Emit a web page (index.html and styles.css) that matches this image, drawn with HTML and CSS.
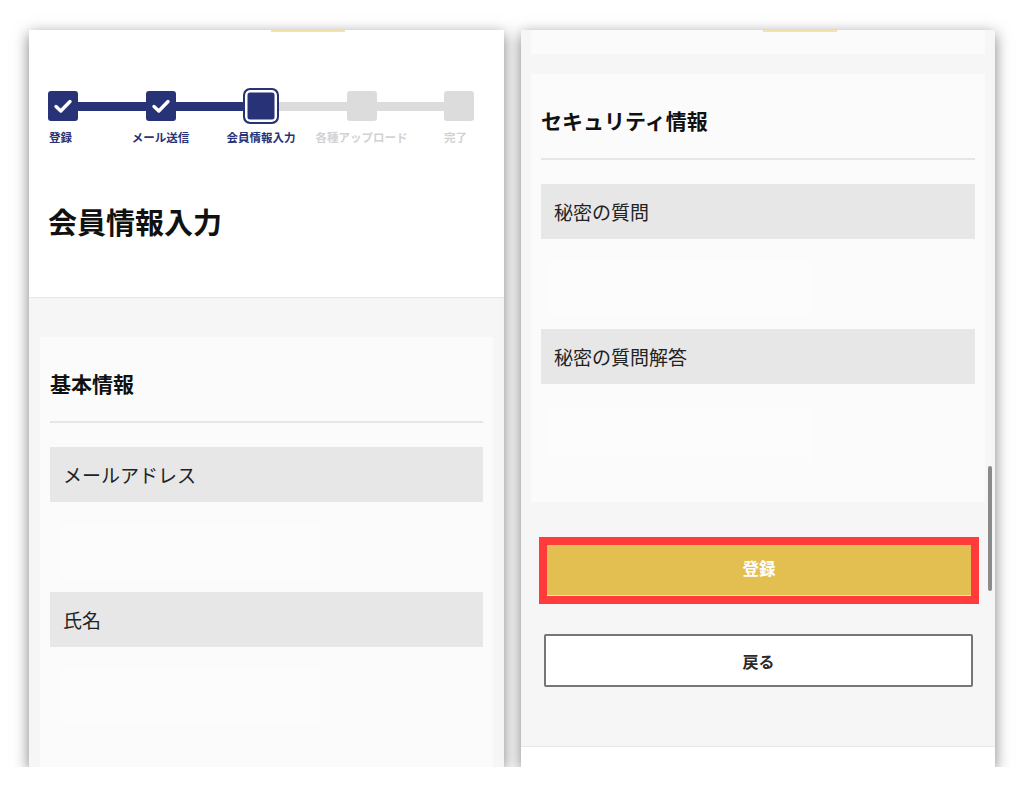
FILE: index.html
```html
<!DOCTYPE html>
<html lang="ja">
<head>
<meta charset="utf-8">
<title>会員情報入力</title>
<link rel="stylesheet" href="styles.css">
</head>
<body>
<div class="screens">
  <section class="phone">
    <span class="topline"></span>
    <header class="page-head">
      <div class="steps">
        <div class="step done">
          <div class="mark"><span class="box"><svg viewBox="0 0 30 30" width="30" height="30"><path d="M8 15.5 L12.8 20 L22 10.5" fill="none" stroke="#fff" stroke-width="3.4" stroke-linecap="round" stroke-linejoin="round"/></svg></span></div>
          <span class="label">登録</span>
        </div>
        <span class="connector on"></span>
        <div class="step done">
          <div class="mark"><span class="box"><svg viewBox="0 0 30 30" width="30" height="30"><path d="M8 15.5 L12.8 20 L22 10.5" fill="none" stroke="#fff" stroke-width="3.4" stroke-linecap="round" stroke-linejoin="round"/></svg></span></div>
          <span class="label">メール送信</span>
        </div>
        <span class="connector on"></span>
        <div class="step current">
          <div class="mark"><span class="box"></span></div>
          <span class="label">会員情報入力</span>
        </div>
        <span class="connector"></span>
        <div class="step todo">
          <div class="mark"><span class="box"></span></div>
          <span class="label">各種アップロード</span>
        </div>
        <span class="connector"></span>
        <div class="step todo">
          <div class="mark"><span class="box"></span></div>
          <span class="label">完了</span>
        </div>
      </div>
      <h1 class="page-title">会員情報入力</h1>
    </header>
    <main class="content">
      <div class="card card-long">
        <h2 class="card-title">基本情報</h2>
        <div class="field">
          <div class="field-label">メールアドレス</div>
          <div class="field-input"><span class="ghost"></span></div>
        </div>
        <div class="field">
          <div class="field-label">氏名</div>
          <div class="field-input"><span class="ghost"></span></div>
        </div>
      </div>
    </main>
  </section>

  <section class="phone phone-right">
    <span class="topline"></span>
    <div class="content content-right">
      <div class="card card-stub"></div>
      <div class="card">
        <h2 class="card-title">セキュリティ情報</h2>
        <div class="field">
          <div class="field-label">秘密の質問</div>
          <div class="field-input"><span class="ghost"></span></div>
        </div>
        <div class="field">
          <div class="field-label">秘密の質問解答</div>
          <div class="field-input"><span class="ghost"></span></div>
        </div>
      </div>
      <div class="highlight">
        <button class="btn btn-primary" type="button">登録</button>
      </div>
      <button class="btn btn-back" type="button">戻る</button>
    </div>
    <footer class="phone-foot"></footer>
    <span class="scrollbar"></span>
  </section>
</div>
</body>
</html>
```

FILE: styles.css
```css
* { box-sizing: border-box; }

html, body {
  margin: 0;
  padding: 0;
  background: #ffffff;
}

body {
  font-family: "Noto Sans CJK JP", "Noto Sans", sans-serif;
  color: #1a1a1a;
}

.screens {
  display: flex;
  gap: 17px;
  padding: 30px 0 0 29px;
}

.phone {
  position: relative;
  width: 475px;
  height: 737px;
  overflow: hidden;
  background: #f6f6f6;
  box-shadow: 0 4px 14px rgba(0, 0, 0, 0.5);
  display: flex;
  flex-direction: column;
}

.phone-right {
  width: 474px;
}

.topline {
  position: absolute;
  top: 0;
  left: 242px;
  width: 74px;
  height: 2px;
  background: #f1e3ab;
}

/* header with steps */
.page-head {
  flex: none;
  background: #ffffff;
  border-bottom: 1px solid #e6e6e6;
  padding: 58px 30px 56px 19px;
}

.steps {
  display: flex;
  align-items: flex-start;
}

.step {
  display: flex;
  flex-direction: column;
  align-items: center;
  width: 30px;
  flex: none;
}

.step.current { width: 36px; }

.mark {
  height: 36px;
  display: flex;
  align-items: center;
  justify-content: center;
}

.box {
  display: block;
  width: 30px;
  height: 30px;
  border-radius: 3px;
  background: #dcdcdc;
}

.box svg { display: block; }

.done .box { background: #283377; }

.current .box {
  width: 36px;
  height: 36px;
  border-radius: 7px;
  background: #283377;
  border: 2.5px solid #283377;
  box-shadow: inset 0 0 0 2.5px #ffffff;
}

.label {
  margin-top: 5px;
  font-size: 11.5px;
  line-height: 16px;
  font-weight: 700;
  white-space: nowrap;
  color: #283377;
}

.step:first-child .label { margin-right: 5px; }
.step:last-child .label { margin-right: 7px; }

.todo .label { color: #d2d2d2; }

.connector {
  flex: 1;
  height: 9px;
  margin-top: 14px;
  background: #dcdcdc;
}

.connector.on { background: #283377; }

.page-title {
  margin: 56px 0 0;
  font-size: 29px;
  line-height: 40px;
  font-weight: 700;
  color: #111;
}

/* content */
.content {
  padding: 39px 11px 0;
}

.card {
  background: #fbfbfb;
  padding: 30px 10px 0;
}

.card-long { padding-bottom: 60px; }

.card-title {
  margin: 0;
  font-size: 21px;
  line-height: 32px;
  font-weight: 700;
  color: #111;
  padding-bottom: 22px;
  border-bottom: 2px solid #e6e6e6;
}

.field { margin-top: 24px; }
.field + .field { margin-top: 0; }

.field-label {
  height: 55px;
  background: #e7e7e7;
  padding-left: 13px;
  display: flex;
  align-items: center;
  font-size: 19px;
  color: #222;
}

.field-input {
  height: 90px;
  padding: 22px 0 0 8px;
}

.ghost {
  display: block;
  width: 262px;
  height: 56px;
  background: #fcfcfc;
}

/* right screen */
.content-right {
  padding: 0 10px;
  flex: 1;
  display: flex;
  flex-direction: column;
}

.card-stub {
  height: 24px;
  padding: 0;
  margin-bottom: 20px;
}

.content-right .card { padding-bottom: 28px; }
.content-right .card-stub { padding-bottom: 0; }

.highlight {
  margin: 35px 6px 0 8px;
  border: 8px solid #ff3b3b;
}

.btn {
  display: flex;
  align-items: center;
  justify-content: center;
  font-family: inherit;
  font-weight: 700;
  cursor: pointer;
}

.btn-primary {
  width: 100%;
  height: 51px;
  border: none;
  border-bottom: 1px solid #f4e7b8;
  background: #e2bf50;
  color: #ffffff;
  font-size: 16.5px;
  padding: 0 0 4px;
}

.btn-back {
  margin: 30px 12px 0 13px;
  height: 53px;
  background: #ffffff;
  border: 2px solid #767676;
  border-radius: 2px;
  color: #2a2a2a;
  font-size: 16px;
}

.phone-foot {
  flex: none;
  height: 21px;
  background: #ffffff;
  border-top: 1px solid #e8e8e8;
}

.scrollbar {
  position: absolute;
  right: 3px;
  top: 436px;
  width: 4px;
  height: 125px;
  border-radius: 2px;
  background: #8a8a8a;
}
```
